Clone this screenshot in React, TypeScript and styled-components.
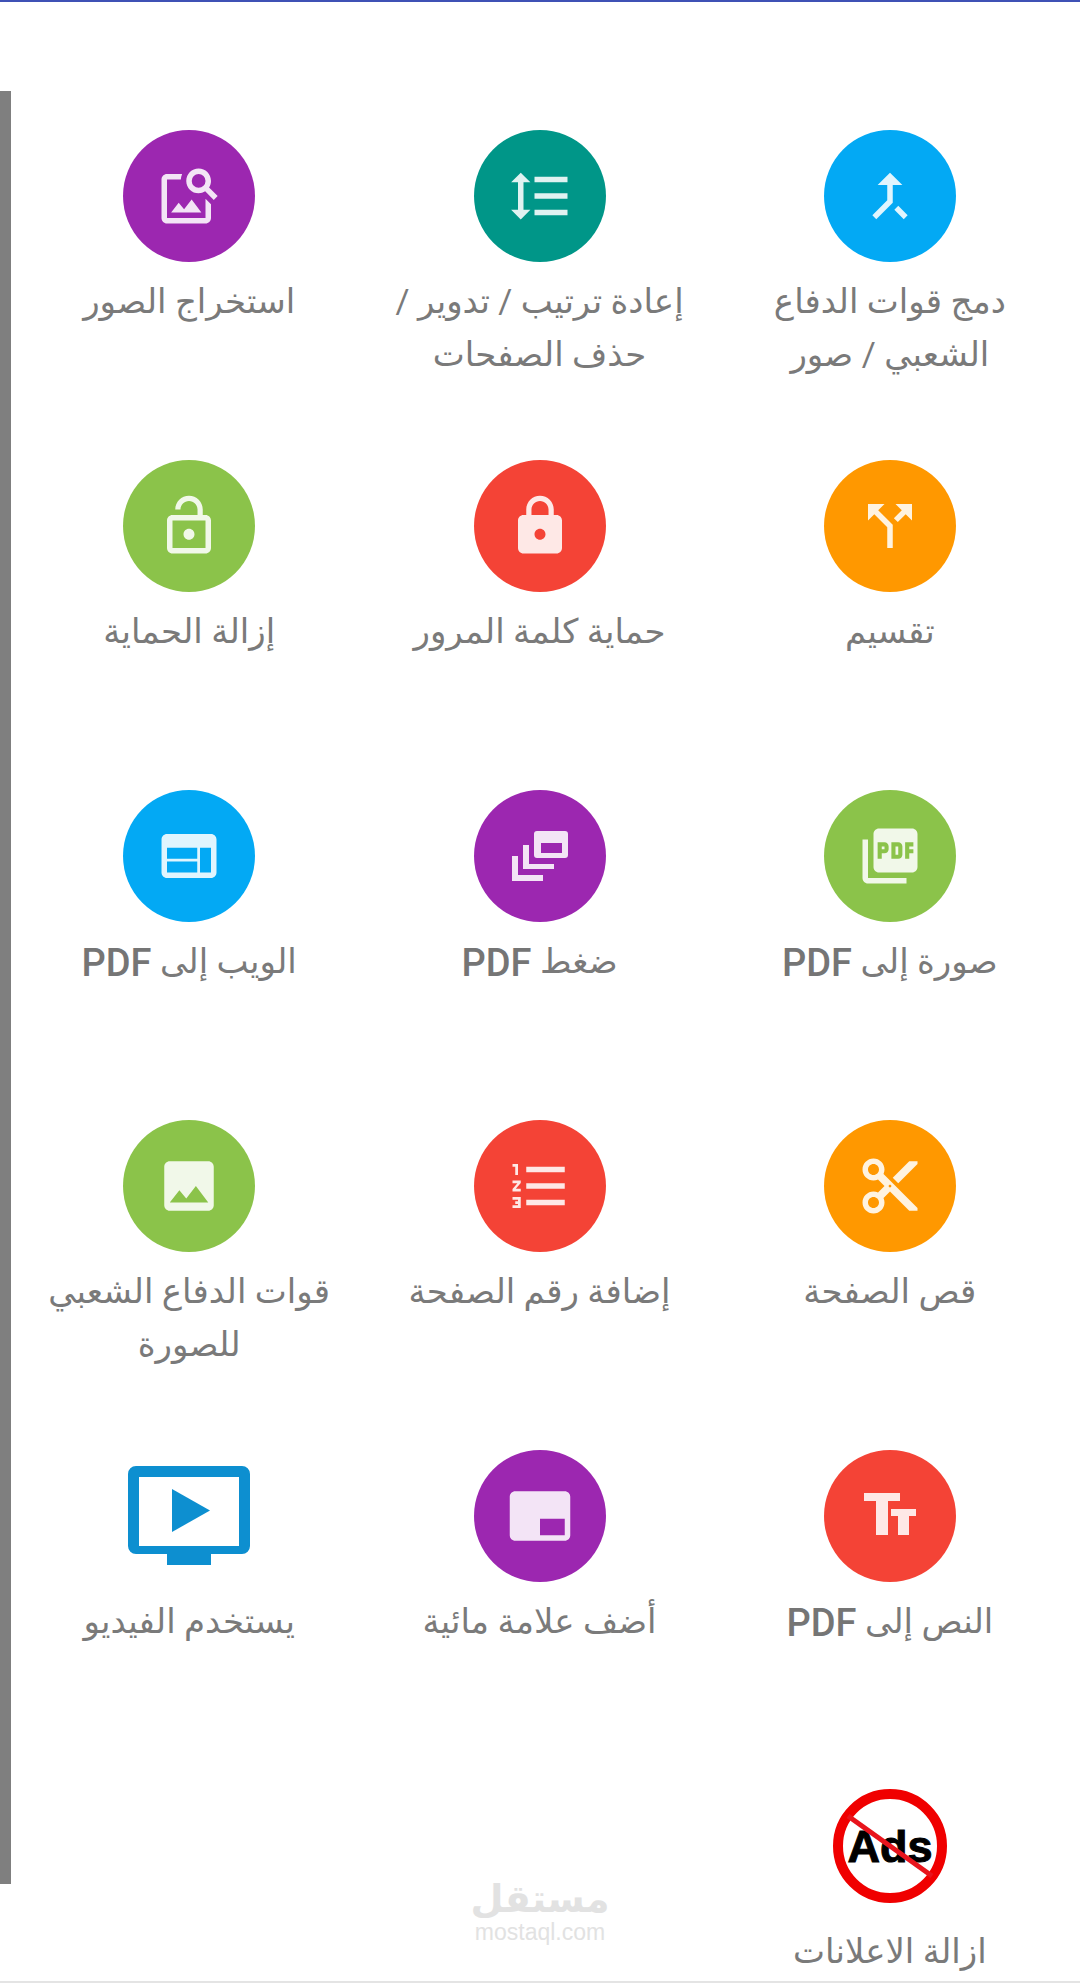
import React from "react";
import styled, { createGlobalStyle } from "styled-components";
import {
  MdCallMerge, MdFormatLineSpacing, MdImageSearch, MdCallSplit, MdLock, MdLockOpen,
  MdPictureAsPdf, MdWeb, MdContentCut, MdFormatListNumbered, MdImage, MdBrandingWatermark,
} from "react-icons/md";

const Global = createGlobalStyle`
  html, body { margin: 0; padding: 0; background: #fff; }
  * { box-sizing: border-box; }
`;

const Page = styled.main`
  position: relative;
  width: 1080px;
  height: 1983px;
  overflow: hidden;
  background: #fff;
  border-top: 2px solid #3f51b5;
  border-bottom: 2px solid #e4e4e4;
  font-family: Roboto, "Noto Sans", "DejaVu Sans", sans-serif;
`;

const ScrollBar = styled.div`
  position: absolute;
  left: 0;
  top: 89px;
  width: 11px;
  height: 1793px;
  background: #7f7f7f;
`;

const Grid = styled.div`
  direction: rtl;
  display: grid;
  grid-template-columns: repeat(3, 1fr);
  grid-auto-rows: 330px;
  padding: 128px 15px 0 14px;
`;

const Tool = styled.div`
  display: flex;
  flex-direction: column;
  align-items: center;
`;

const Circle = styled.div<{ $bg: string }>`
  width: 132px;
  height: 132px;
  flex: none;
  border-radius: 50%;
  background: ${(p) => p.$bg};
  color: rgba(255, 255, 255, 0.88);
  display: flex;
  align-items: center;
  justify-content: center;
`;

const Graphic = styled.div`
  width: 132px;
  height: 132px;
  flex: none;
  display: flex;
  align-items: center;
  justify-content: center;
`;

const Label = styled.div`
  margin-top: 13px;
  font-size: 34px;
  line-height: 53px;
  color: #7a7a7a;
  text-align: center;
  white-space: nowrap;
`;

const Latin = styled.span`
  font-size: 38px;
  font-weight: 500;
  line-height: 1;
  vertical-align: -3px;
  color: #757575;
`;

const Watermark = styled.div`
  position: absolute;
  left: 470px;
  top: 1876px;
  width: 140px;
  display: flex;
  flex-direction: column;
  align-items: center;
  color: #e2e2e2;
  font-family: "Liberation Sans", sans-serif;
`;

const WatermarkWord = styled.div`
  font-family: "DejaVu Sans", sans-serif;
  font-weight: 700;
  font-size: 38px;
  line-height: 42px;
`;

const WatermarkUrl = styled.div`
  font-size: 23px;
  line-height: 24px;
`;

const Compress = () => (
  <svg width="66" height="66" viewBox="33 33 66 66" fill="currentColor" aria-hidden>
    <path fillRule="evenodd" d="M63 41h28a3 3 0 0 1 3 3v21a3 3 0 0 1-3 3H63a3 3 0 0 1-3-3V44a3 3 0 0 1 3-3zM67 53v10h21V53z" />
    <path d="M49 55h6v19h25v5H49zM38 66h6v19h25v6H38z" />
  </svg>
);

const TextSize = () => (
  <svg width="66" height="66" viewBox="33 33 66 66" fill="currentColor" aria-hidden>
    <path d="M40 43h36v8H64v34H52V51H40zM67 59h25v7h-7v19H74V66h-7z" />
  </svg>
);

const NoAds = () => (
  <svg width="118" height="118" viewBox="0 0 118 118" aria-hidden>
    <circle cx="59" cy="59" r="52" fill="#fff" stroke="#f00000" strokeWidth="10" />
    <text x="59" y="75" textAnchor="middle" fontFamily="'Liberation Sans', sans-serif" fontWeight="700" fontSize="45" stroke="#000" strokeWidth="1" fill="#000">Ads</text>
    <line x1="17" y1="29" x2="101" y2="89" stroke="#e8141c" strokeWidth="5" />
  </svg>
);

const Video = () => (
  <svg width="122" height="100" viewBox="0 0 122 100" aria-hidden>
    <path fill="#0d8fd0" fillRule="evenodd" d="M8 0h106a8 8 0 0 1 8 8v72a8 8 0 0 1-8 8H83v11H39V88H8a8 8 0 0 1-8-8V8a8 8 0 0 1 8-8zM11 11v69h100V11z" />
    <path fill="#0d8fd0" d="M44 23l38 21.500L44 66z" />
  </svg>
);

const BLUE = "#03a9f4", TEAL = "#009688", PURPLE = "#9c27b0", ORANGE = "#ff9800", RED = "#f44336", GREEN = "#8bc34a";

const tools: { bg?: string; icon: React.ReactNode; lines: string[] }[] = [
  { bg: BLUE, icon: <MdCallMerge size={66} />, lines: ["دمج قوات الدفاع", "الشعبي / صور"] },
  { bg: TEAL, icon: <MdFormatLineSpacing size={66} />, lines: ["إعادة ترتيب / تدوير /", "حذف الصفحات"] },
  { bg: PURPLE, icon: <MdImageSearch size={66} />, lines: ["استخراج الصور"] },
  { bg: ORANGE, icon: <MdCallSplit size={66} />, lines: ["تقسيم"] },
  { bg: RED, icon: <MdLock size={66} />, lines: ["حماية كلمة المرور"] },
  { bg: GREEN, icon: <MdLockOpen size={66} />, lines: ["إزالة الحماية"] },
  { bg: GREEN, icon: <MdPictureAsPdf size={66} />, lines: ["صورة إلى PDF"] },
  { bg: PURPLE, icon: <Compress />, lines: ["ضغط PDF"] },
  { bg: BLUE, icon: <MdWeb size={66} />, lines: ["الويب إلى PDF"] },
  { bg: ORANGE, icon: <MdContentCut size={66} />, lines: ["قص الصفحة"] },
  { bg: RED, icon: <MdFormatListNumbered size={66} />, lines: ["إضافة رقم الصفحة"] },
  { bg: GREEN, icon: <MdImage size={66} />, lines: ["قوات الدفاع الشعبي", "للصورة"] },
  { bg: RED, icon: <TextSize />, lines: ["النص إلى PDF"] },
  { bg: PURPLE, icon: <MdBrandingWatermark size={66} />, lines: ["أضف علامة مائية"] },
  { icon: <Video />, lines: ["يستخدم الفيديو"] },
  { icon: <NoAds />, lines: ["ازالة الاعلانات"] },
];

const renderLine = (line: string) =>
  line.split(/(PDF)/).map((part, k) => (part === "PDF" ? <Latin key={k}>{part}</Latin> : part));

export default function App() {
  return (
    <>
      <Global />
      <Page>
        <ScrollBar />
        <Grid>
          {tools.map((t, i) => (
            <Tool key={i}>
              {t.bg ? <Circle $bg={t.bg}>{t.icon}</Circle> : <Graphic>{t.icon}</Graphic>}
              <Label>
                {t.lines.map((l, j) => (
                  <div key={j}>{renderLine(l)}</div>
                ))}
              </Label>
            </Tool>
          ))}
        </Grid>
        <Watermark>
          <WatermarkWord>مستقل</WatermarkWord>
          <WatermarkUrl>mostaql.com</WatermarkUrl>
        </Watermark>
      </Page>
    </>
  );
}
